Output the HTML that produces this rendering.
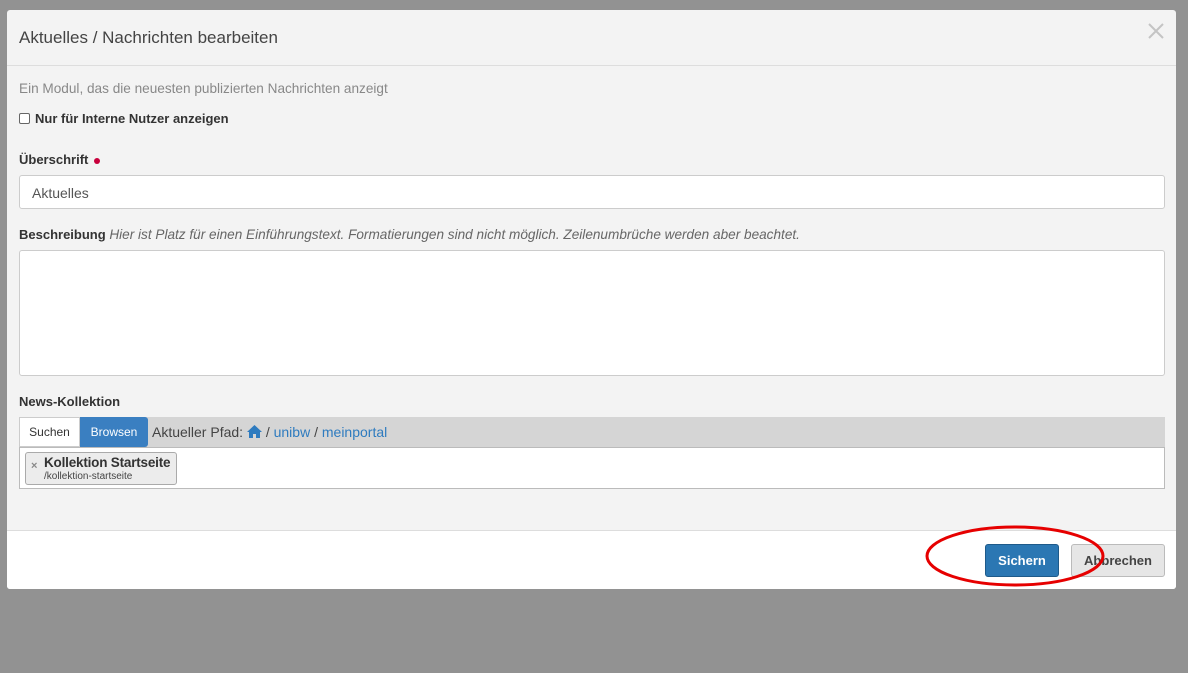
<!DOCTYPE html>
<html><head><meta charset="utf-8"><style>
*{box-sizing:border-box;margin:0;padding:0}
body{width:1188px;height:673px;background:#929292;font-family:"Liberation Sans",sans-serif;position:relative;overflow:hidden;color:#333}
.modal{position:absolute;left:7px;top:10px;width:1169px;height:579px;background:#f3f3f3;border-radius:3px;overflow:hidden}
.hdr{height:56px;border-bottom:1px solid #ddd;position:relative}
.hdr h1{position:absolute;left:12px;top:18px;font-size:17px;font-weight:normal;color:#444}
.close{position:absolute;right:12px;top:13px}
.p{position:absolute;left:12px}
.sub{top:71px;font-size:13.6px;color:#888}
.chk{top:101px;font-size:13px;font-weight:bold;color:#333;display:flex;align-items:center}
.chk span{width:11px;height:11px;border:1px solid #666;border-radius:2px;background:#fff;margin-right:5px;display:inline-block}
.lbl{font-size:13px;font-weight:bold;color:#333}
.inp{background:#fff;border:1px solid #ccc;border-radius:3px;width:1146px}
.footer{position:absolute;left:0;top:520px;width:100%;height:59px;background:#fff;border-top:1px solid #ddd}
.btn{position:absolute;top:13px;height:33px;border-radius:3px;font-size:13px;font-weight:bold;text-align:center;line-height:31px}
</style></head><body>
<div class="modal">
 <div class="hdr"><h1>Aktuelles / Nachrichten bearbeiten</h1>
  <svg class="close" width="16" height="16" viewBox="0 0 16 16"><path d="M1 1L15 15M15 1L1 15" stroke="#c4c4c4" stroke-width="2"/></svg></div>
 <div class="p sub">Ein Modul, das die neuesten publizierten Nachrichten anzeigt</div>
 <div class="p chk"><span></span>Nur für Interne Nutzer anzeigen</div>
 <div class="p lbl" style="top:142px">Überschrift <span style="display:inline-block;width:6px;height:6px;border-radius:50%;background:#c8003c;margin-left:2px;vertical-align:middle"></span></div>
 <div class="p inp" style="top:165px;height:34px;font-size:14px;color:#555;padding:9px 12px">Aktuelles</div>
 <div class="p" style="top:217px;font-size:13px"><b>Beschreibung</b> <i style="color:#666;font-size:13.6px">Hier ist Platz für einen Einführungstext. Formatierungen sind nicht möglich. Zeilenumbrüche werden aber beachtet.</i></div>
 <div class="p inp" style="top:240px;height:126px"></div>
 <div class="p lbl" style="top:384px">News-Kollektion</div>
 <div class="p" style="top:407px;width:1146px;height:30px;background:#d5d5d5;font-size:14px">
  <div style="position:absolute;left:0;top:0;width:61px;height:30px;background:#fff;border:1px solid #ccc;line-height:28px;text-align:center;font-size:12px;color:#333">Suchen</div>
  <div style="position:absolute;left:61px;top:0;width:68px;height:30px;background:#3a7fc1;line-height:30px;text-align:center;font-size:12px;color:#fff;border-radius:0 3px 3px 0">Browsen</div>
  <div style="position:absolute;left:133px;top:7px;color:#444">Aktueller Pfad: <svg width="15" height="13" viewBox="0 0 15 13" style="vertical-align:-1px"><path d="M7.5 0L0 7h2v6h4V9h3v4h4V7h2z" fill="#2e7bbf"/></svg> / <span style="color:#2e7bbf">unibw</span> / <span style="color:#2e7bbf">meinportal</span></div>
 </div>
 <div class="p" style="top:437px;width:1146px;height:42px;background:#fff;border:1px solid #bbb">
  <div style="position:absolute;left:5px;top:4px;width:152px;height:33px;background:#ececec;border:1px solid #aaa;border-radius:3px">
   <span style="position:absolute;left:5px;top:7px;font-size:11px;color:#888;font-weight:bold">×</span>
   <div style="position:absolute;left:18px;top:2px;font-size:13.5px;color:#333;font-weight:bold;letter-spacing:-0.2px">Kollektion Startseite</div>
   <div style="position:absolute;left:18px;top:18px;font-size:10px;color:#444">/kollektion-startseite</div>
  </div>
 </div>
 <div class="footer">
  <div class="btn" style="left:978px;width:74px;background:#2b77b3;border:1px solid #1e5a8a;color:#fff">Sichern</div>
  <div class="btn" style="left:1064px;width:94px;background:#e6e6e6;border:1px solid #bbb;color:#444">Abbrechen</div>
 </div>
</div>
<svg style="position:absolute;left:0;top:0" width="1188" height="673"><ellipse cx="1015" cy="556" rx="88" ry="29" fill="none" stroke="#e60000" stroke-width="3"/></svg>
</body></html>
